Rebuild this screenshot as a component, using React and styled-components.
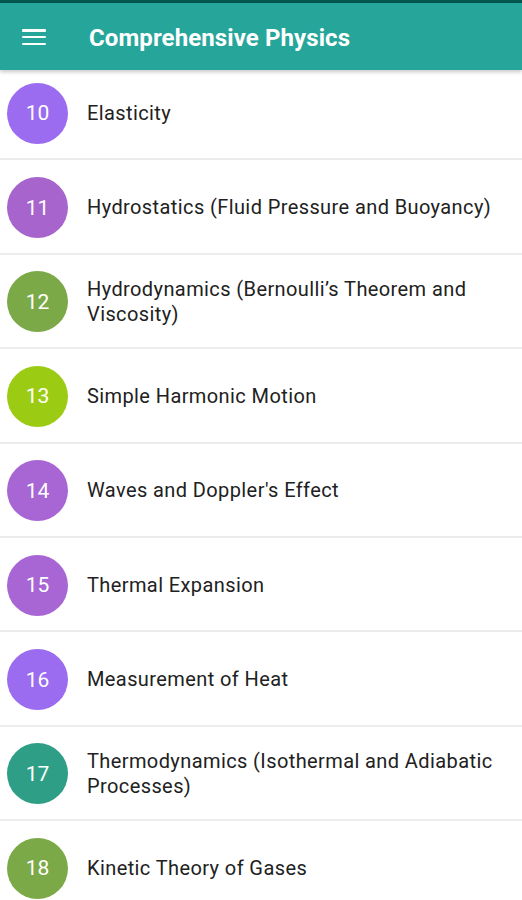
import React from "react";
import styled, { createGlobalStyle } from "styled-components";

const Global = createGlobalStyle`
  html, body { margin: 0; padding: 0; background: #ffffff; }
  body { font-family: Roboto, "Noto Sans", Arial, sans-serif; overflow: hidden; }
`;

const Page = styled.div`
  width: 522px;
  height: 900px;
  overflow: hidden;
  background: #fff;
`;

const StatusStrip = styled.div`
  height: 3px;
  background: #00574e;
`;

const AppBar = styled.header`
  position: relative;
  z-index: 2;
  height: 67px;
  background: #26a69a;
  display: flex;
  align-items: center;
  padding-left: 22px;
  box-shadow: 0 2px 4px rgba(0, 0, 0, 0.22);
`;

const MenuButton = styled.div`
  width: 24px;
  height: 16px;
  display: flex;
  flex-direction: column;
  justify-content: space-between;
  margin-right: 43px;
  margin-top: 1px;
`;

const Bar = styled.span`
  display: block;
  height: 2.5px;
  background: #fff;
  border-radius: 1px;
`;

const Title = styled.h1`
  margin: 0;
  color: #fff;
  font-family: Roboto, Arial, sans-serif;
  font-weight: 700;
  font-size: 24px;
  letter-spacing: 0.1px;
  margin-top: 2px;
`;

const List = styled.ul`
  list-style: none;
  margin: -4px 0 0 0;
  padding: 0;
`;

const Row = styled.li`
  box-sizing: border-box;
  height: 94.4px;
  display: flex;
  align-items: center;
  padding-left: 7px;
  border-bottom: 2px solid #ececec;
`;

const Badge = styled.div`
  flex: 0 0 61px;
  width: 61px;
  height: 61px;
  border-radius: 50%;
  background: ${(p) => p.$color};
  color: #fff;
  display: flex;
  align-items: center;
  justify-content: center;
  font-size: 21px;
  font-family: Roboto, Arial, sans-serif;
  margin-top: 2px;
`;

const Label = styled.div`
  margin-left: 19px;
  margin-top: 2px;
  padding-right: 20px;
  font-size: 20px;
  line-height: 25px;
  color: #212121;
  font-family: Roboto, Arial, sans-serif;
  letter-spacing: 0.4px;
`;

const items = [
  { n: 10, t: "Elasticity", c: "#9b6cf0" },
  { n: 11, t: "Hydrostatics (Fluid Pressure and Buoyancy)", c: "#a664cc" },
  { n: 12, t: "Hydrodynamics (Bernoulli’s Theorem and Viscosity)", c: "#7ca947" },
  { n: 13, t: "Simple Harmonic Motion", c: "#9ccb14" },
  { n: 14, t: "Waves and Doppler's Effect", c: "#a766d3" },
  { n: 15, t: "Thermal Expansion", c: "#a766d3" },
  { n: 16, t: "Measurement of Heat", c: "#9b6cf0" },
  { n: 17, t: "Thermodynamics (Isothermal and Adiabatic Processes)", c: "#2e9e86" },
  { n: 18, t: "Kinetic Theory of Gases", c: "#7ca947" },
];

export default function App() {
  return (
    <Page>
      <Global />
      <StatusStrip />
      <AppBar>
        <MenuButton>
          <Bar />
          <Bar />
          <Bar />
        </MenuButton>
        <Title>Comprehensive Physics</Title>
      </AppBar>
      <List>
        {items.map((it) => (
          <Row key={it.n}>
            <Badge $color={it.c}>{it.n}</Badge>
            <Label>{it.t}</Label>
          </Row>
        ))}
      </List>
    </Page>
  );
}
